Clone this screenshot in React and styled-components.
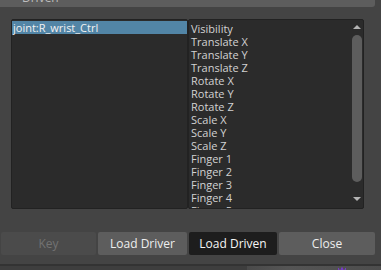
import React from "react";
import styled, { createGlobalStyle } from "styled-components";

const GlobalStyle = createGlobalStyle`
    html, body {
        margin: 0;
        padding: 0;
        background: #444444;
    }
    body {
        font-family: "Open Sans", "Noto Sans", sans-serif;
    }
`;

const attributes = [
    "Visibility",
    "Translate X",
    "Translate Y",
    "Translate Z",
    "Rotate X",
    "Rotate Y",
    "Rotate Z",
    "Scale X",
    "Scale Y",
    "Scale Z",
    "Finger 1",
    "Finger 2",
    "Finger 3",
    "Finger 4",
    "Finger 5",
];

const App = () => {
    return (
        <Window>
            <GlobalStyle />
            <FrameHeader>
                <span>Driven</span>
            </FrameHeader>
            <Lists>
                <ListBox $width={177}>
                    <Items>
                        <Row $selected>joint:R_wrist_Ctrl</Row>
                    </Items>
                </ListBox>
                <ListBox $width={176}>
                    <Items $pad>
                        {attributes.map((name) => (
                            <Row key={name}>{name}</Row>
                        ))}
                    </Items>
                    <ScrollBar>
                        <Arrow viewBox="0 0 10 5">
                            <path d="M1 5 L5 1 L9 5 Z" fill="#b4b4b4" />
                        </Arrow>
                        <Thumb />
                        <Arrow viewBox="0 0 10 5">
                            <path d="M1 0 L9 0 L5 4 Z" fill="#b4b4b4" />
                        </Arrow>
                    </ScrollBar>
                </ListBox>
            </Lists>
            <Buttons>
                <Button $variant="disabled" $width={95}>Key</Button>
                <Button $width={89}>Load Driver</Button>
                <Button $variant="active" $width={88}>Load Driven</Button>
                <Button $width={96}>Close</Button>
            </Buttons>
            <BottomStrip>
                <Shade />
                <Squiggle viewBox="0 0 8 6">
                    <path d="M0 1 L2 5 L4 1 L6 5 L8 1" stroke="#7a3ad0" strokeWidth="1.2" fill="none" />
                </Squiggle>
            </BottomStrip>
        </Window>
    );
};

const Window = styled.div`
    width: 381px;
    height: 270px;
    overflow: hidden;
    background: #444444;
    display: flex;
    flex-direction: column;
`;

const FrameHeader = styled.div`
    height: 17px;
    margin-top: -10px;
    margin-right: 6px;
    background: #5d5d5d;
    border-bottom-right-radius: 3px;
    padding-left: 22px;
    font-size: 12px;
    line-height: 16px;
    color: #bdbdbd;
`;

const Lists = styled.div`
    display: flex;
    margin-top: 12px;
    padding-left: 11px;
    height: 190px;
`;

const ListBox = styled.div`
    display: flex;
    width: ${(p) => p.$width}px;
    height: 100%;
    box-sizing: border-box;
    background: #2b2b2b;
    border: 1px solid #222222;
    border-radius: 2px;
    overflow: hidden;
`;

const Items = styled.div`
    flex: 1;
    display: flex;
    flex-direction: column;
    padding-top: ${(p) => (p.$pad ? 2 : 1)}px;
    overflow: hidden;
`;

const Row = styled.div`
    flex-shrink: 0;
    height: 13px;
    line-height: 13px;
    padding-left: ${(p) => (p.$selected ? 1 : 2)}px;
    font-size: 11px;
    white-space: nowrap;
    color: ${(p) => (p.$selected ? "#f2f2f2" : "#d2d2d2")};
    background: ${(p) => (p.$selected ? "#5285a6" : "transparent")};
`;

const ScrollBar = styled.div`
    width: 11px;
    margin-right: 1px;
    display: flex;
    flex-direction: column;
    align-items: center;
    padding: 4px 0 6px;
`;

const Arrow = styled.svg`
    width: 10px;
    height: 5px;
    flex-shrink: 0;
`;

const Thumb = styled.div`
    width: 10px;
    flex: 1;
    margin: 6px 0 15px;
    background: #5d5d5d;
    border-radius: 5px;
`;

const Buttons = styled.div`
    display: flex;
    gap: 2px;
    margin-top: 23px;
    padding-left: 1px;
`;

const Button = styled.div`
    width: ${(p) => p.$width}px;
    height: 23px;
    display: flex;
    align-items: center;
    justify-content: center;
    font-size: 12px;
    border-radius: 2px;
    background: ${(p) =>
        p.$variant === "active" ? "#1d1d1d" : p.$variant === "disabled" ? "#4b4b4b" : "#5d5d5d"};
    color: ${(p) =>
        p.$variant === "active" ? "#f5f5f5" : p.$variant === "disabled" ? "#727272" : "#eeeeee"};
`;

const BottomStrip = styled.div`
    margin-top: 9px;
    flex: 1;
    display: flex;
    align-items: flex-start;
    border-top: 2px solid #333333;
    background: #3e3e3e;
    position: relative;
`;

const Shade = styled.div`
    margin-left: 247px;
    width: 134px;
    height: 100%;
    background: linear-gradient(90deg, #4a4a4a, #555555 30%, #4d4d4d);
`;

const Squiggle = styled.svg`
    position: absolute;
    left: 338px;
    top: 1px;
    width: 8px;
    height: 6px;
`;

export default App;
